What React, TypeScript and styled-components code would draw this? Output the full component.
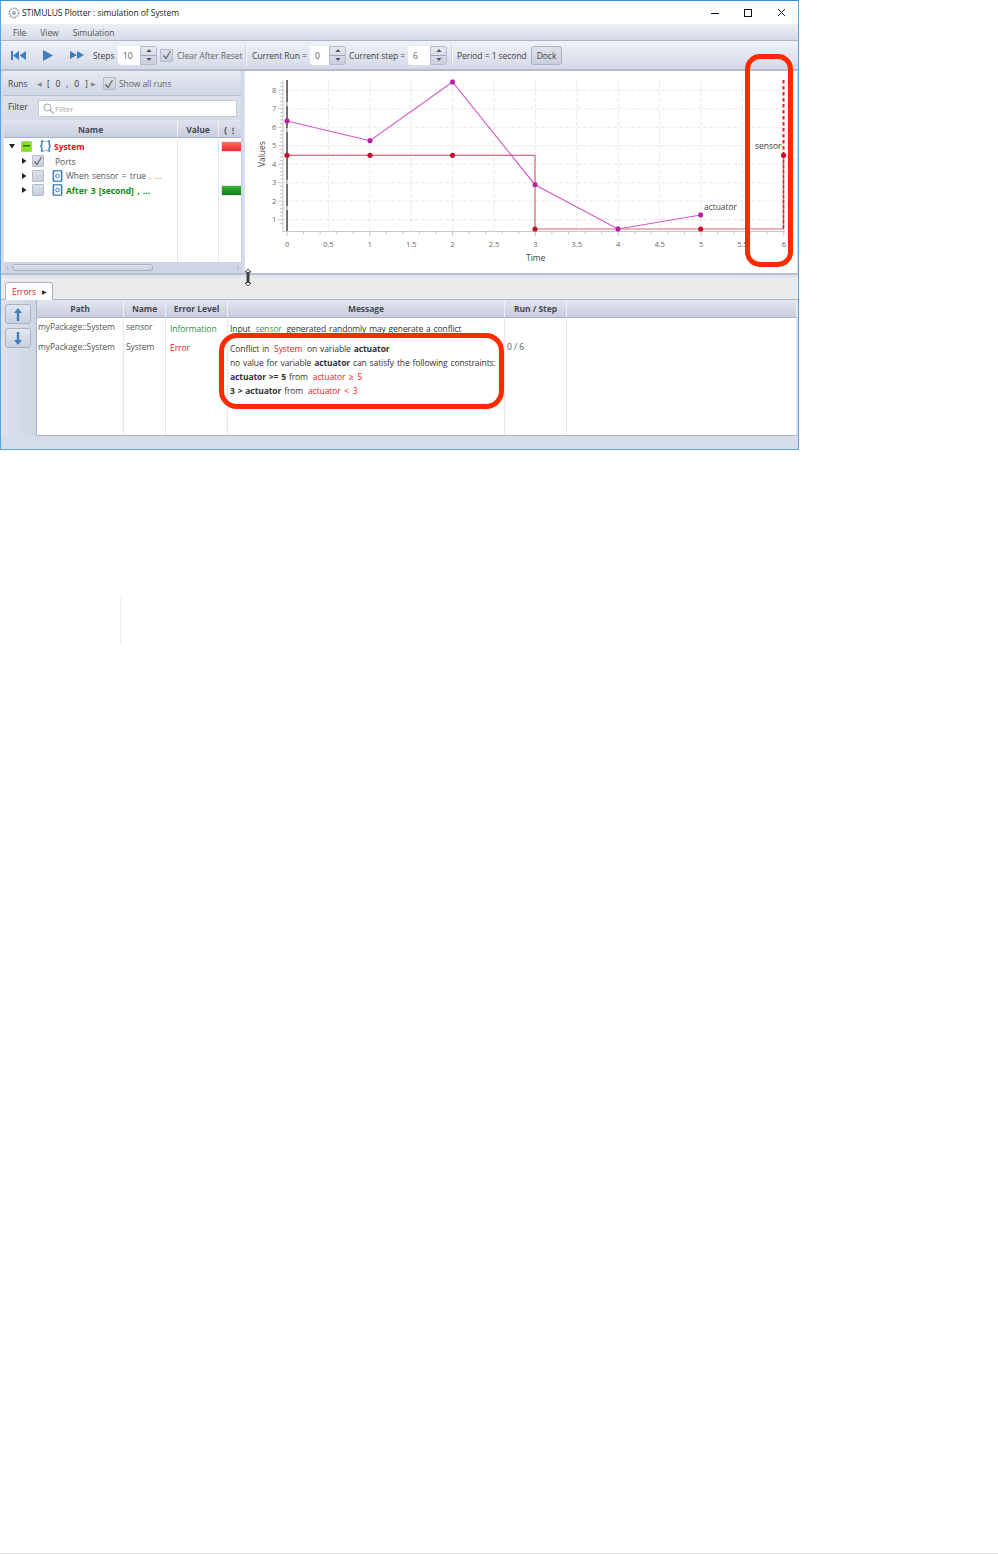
import React from "react";
import styled, { createGlobalStyle } from "styled-components";

const Global = createGlobalStyle`
  html, body { margin: 0; padding: 0; background: #fff; }
  body { font-family: "Open Sans", "Liberation Sans", sans-serif; font-size: 8.5px; letter-spacing: -0.05px; color: #3c3c3c; }
  * { box-sizing: border-box; }
`;

const Page = styled.div`
  height: 1554px;
  display: flex;
  flex-direction: column;
`;
const Win = styled.div`
  position: relative;
  width: 799px;
  height: 450px;
  border: 1px solid #5aa5e0;
  border-top-color: #2f8fd8;
  display: flex;
  flex-direction: column;
  background: #d6dcea;
  overflow: hidden;
`;
const TitleBar = styled.div`
  height: 23px;
  background: #fff;
  display: flex;
  align-items: center;
  padding-left: 7px;
  color: #222;
  flex: none;
`;
const TitleText = styled.span`
  margin-left: 2px;
`;
const WinControls = styled.div`
  margin-left: auto;
  display: flex;
  align-items: center;
  gap: 25px;
  padding-right: 12px;
`;
const MenuBar = styled.div`
  height: 17px;
  flex: none;
  background: linear-gradient(#eceff5, #d5dbe8);
  border-bottom: 1px solid #a7b6c9;
  display: flex;
  align-items: center;
  padding-left: 12px;
  gap: 14px;
  color: #555;
`;
const Toolbar = styled.div`
  height: 28px;
  flex: none;
  background: linear-gradient(#eff2f9, #d3d9e7);
  display: flex;
  align-items: center;
  padding-left: 10px;
  color: #444;
  white-space: nowrap;
`;
const ToolIcon = styled.svg<{ $ml: number }>`
  margin-left: ${(p) => p.$ml}px;
  flex: none;
`;
const Label = styled.span<{ $ml?: number; $muted?: boolean; $w?: number }>`
  margin-left: ${(p) => p.$ml ?? 0}px;
  color: ${(p) => (p.$muted ? "#666" : "#444")};
  ${(p) => (p.$w ? `width: ${p.$w}px; flex: none;` : "")}
`;
const Spinner = styled.div<{ $input: number; $ml: number }>`
  margin-left: ${(p) => p.$ml}px;
  display: grid;
  grid-template-columns: ${(p) => p.$input}px 17px;
  height: 19px;
  flex: none;
`;
const SpinInput = styled.div`
  background: #fff;
  border-radius: 3px 0 0 3px;
  padding: 4px 0 0 5px;
  color: #555;
  line-height: 11px;
`;
const SpinButtons = styled.div`
  display: flex;
  flex-direction: column;
  border: 1px solid #b4bccb;
  border-radius: 0 3px 3px 0;
  background: linear-gradient(#e6e9f1, #c9cfdd);
`;
const SpinButton = styled.div`
  flex: 1;
  display: flex;
  align-items: center;
  justify-content: center;
  & + & { border-top: 1px solid #9da6b8; }
`;
const CheckBox = styled.div<{ $bg?: string; $ml?: number; $size?: number }>`
  width: ${(p) => p.$size ?? 13}px;
  height: ${(p) => p.$size ?? 13}px;
  margin-left: ${(p) => p.$ml ?? 0}px;
  flex: none;
  background: ${(p) => p.$bg ?? "linear-gradient(#dde1ea, #c8cedd)"};
  border: 1px solid #b3bccd;
  border-radius: 1px;
  display: flex;
  align-items: center;
  justify-content: center;
`;
const Sep = styled.div<{ $ml: number; $mr: number }>`
  width: 2px;
  height: 21px;
  margin: 0 ${(p) => p.$mr}px 0 ${(p) => p.$ml}px;
  background: #f3f5fa;
  border-left: 1px solid #d0d5e2;
  flex: none;
`;
const DockButton = styled.div`
  margin-left: 3px;
  width: 31px;
  height: 19px;
  border: 1px solid #aab2c2;
  border-radius: 3px;
  background: linear-gradient(#dfe3ec, #c8cedc);
  display: flex;
  align-items: center;
  justify-content: center;
  color: #444;
`;
const Rule = styled.div`
  height: 2px;
  flex: none;
  background: #b7bccb;
`;
const Main = styled.div`
  height: 202px;
  flex: none;
  display: flex;
`;
const LeftPane = styled.div`
  width: 240px;
  flex: none;
  display: flex;
  flex-direction: column;
  background: #d6dcea;
  border-left: 2px solid #d6dcea;
`;
const RunsRow = styled.div`
  height: 25px;
  flex: none;
  display: flex;
  align-items: center;
  padding: 1px 0 0 5px;
  background: linear-gradient(#e8ebf3, #cfd5e3);
  border-bottom: 1px solid #b9c2d2;
  color: #444;
`;
const Bracket = styled.span`
  width: 49px;
  flex: none;
  padding-left: 5px;
  color: #333;
  letter-spacing: 0.7px;
  word-spacing: 2.2px;
`;
const TriMark = styled.span<{ $ml: number }>`
  margin-left: ${(p) => p.$ml}px;
  color: #888;
  font-size: 6px;
`;
const FilterRow = styled.div`
  height: 24px;
  flex: none;
  display: flex;
  align-items: center;
  padding-left: 5px;
  background: linear-gradient(#dde1ea, #d6dbe8);
`;
const FilterLabel = styled.span`
  width: 30px;
  flex: none;
  margin-top: -3px;
`;
const FilterBox = styled.div`
  width: 199px;
  height: 17px;
  margin-top: 1px;
  background: #fff;
  border: 1px solid #c3c9d6;
  display: flex;
  align-items: center;
  padding-left: 4px;
  gap: 1px;
  color: #a8a8a8;
  font-size: 8px;
`;
const TreeHead = styled.div`
  height: 18px;
  flex: none;
  margin-left: 1px;
  display: grid;
  grid-template-columns: 174px 41px 1fr;
  border-bottom: 1px solid #a9b3c4;
`;
const HeadCell = styled.div<{ $bare?: boolean }>`
  background: linear-gradient(#e0e4ee, #c8cedd);
  border-right: 1px solid ${(p) => (p.$bare ? "transparent" : "#eef1f7")};
  font-weight: 700;
  color: #454a55;
  display: flex;
  align-items: center;
  justify-content: ${(p) => (p.$bare ? "flex-end" : "center")};
  padding: 2px ${(p) => (p.$bare ? 3 : 0)}px 0 0;
  overflow: hidden;
`;
const MoreDots = styled.span`
  color: #333;
  font-weight: 700;
  margin-left: 2px;
  font-size: 8px;
`;
const TreeBody = styled.div`
  flex: 1;
  margin-left: 1px;
  background: #fff;
  display: grid;
  grid-template-columns: 174px 41px 1fr;
  grid-template-rows: 14.7px 14.7px 14.7px 14.7px 1fr;
  padding-top: 1px;
  min-height: 0;
`;
const NameCell = styled.div<{ $indent: number }>`
  border-right: 1px solid #dfe9f3;
  display: flex;
  align-items: center;
  padding-left: ${(p) => p.$indent}px;
  white-space: nowrap;
`;
const ValCell = styled.div`
  border-right: 1px solid #dfe9f3;
`;
const BarCell = styled.div`
  padding-left: 2px;
  display: flex;
  align-items: center;
`;
const ColorBar = styled.div<{ $c: string; $d: string }>`
  width: 100%;
  height: 11px;
  background: linear-gradient(${(p) => p.$c}, ${(p) => p.$d});
  border: 1px solid #e4e4e4;
  border-right: 0;
`;
const NodeText = styled.span<{ $color?: string; $bold?: boolean; $ml: number }>`
  margin-left: ${(p) => p.$ml}px;
  color: ${(p) => p.$color ?? "#555"};
  font-weight: ${(p) => (p.$bold ? 700 : 400)};
  word-spacing: 1.1px;
`;
const IconGap = styled.span`
  width: 8px;
  flex: none;
`;
const Orange = styled.span`
  color: #d9661a;
`;
const ScrollBar = styled.div`
  position: relative;
  height: 11px;
  flex: none;
  background: #d0d6e6;
  display: flex;
  align-items: center;
  padding: 0 2px;
  margin-left: 1px;
  color: #8a8f9a;
  font-size: 7px;
  justify-content: space-between;
`;
const Thumb = styled.div`
  position: absolute;
  left: 8px;
  top: 2px;
  width: 141px;
  height: 7px;
  background: linear-gradient(#dfe3ec, #ccd2df);
  border: 1px solid #a9b0bf;
  border-radius: 3px;
`;
const PaneGap = styled.div`
  width: 4px;
  flex: none;
  background: linear-gradient(90deg, #cdd3e2, #dde2ed);
`;
const ChartPane = styled.div`
  width: 552px;
  flex: none;
  background: #fff;
`;
const ChartSvg = styled.svg`
  display: block;
`;
const HSplit = styled.div`
  height: 5px;
  flex: none;
  background: linear-gradient(#b9bfce 0 2px, #dfe3ec 2px);
`;
const TabStrip = styled.div`
  height: 22px;
  flex: none;
  background: #ebebeb;
  display: flex;
  align-items: flex-end;
  padding-left: 4px;
  border-bottom: 1px solid #a9b5c6;
`;
const Tab = styled.div`
  width: 48px;
  height: 18px;
  background: #fff;
  border: 1px solid #a9b5c6;
  border-bottom: 0;
  border-radius: 3px 3px 0 0;
  display: flex;
  align-items: center;
  padding-left: 6px;
  color: #f02020;
  margin-bottom: -1px;
`;
const TabArrow = styled.span`
  color: #222;
  font-size: 6px;
  margin-left: 6px;
`;
const ErrorArea = styled.div`
  height: 136px;
  flex: none;
  display: flex;
`;
const SideBar = styled.div`
  width: 35px;
  flex: none;
  padding: 4px 0 0 4px;
  display: flex;
  flex-direction: column;
  gap: 4px;
  background: linear-gradient(90deg, #dde2ec, #ced5e4);
`;
const ArrowButton = styled.div`
  width: 26px;
  height: 20px;
  border: 1px solid #aab3c4;
  border-radius: 3px;
  background: linear-gradient(#e3e7ef, #c9cfde);
  display: flex;
  align-items: center;
  justify-content: center;
`;
const ErrorTable = styled.div`
  width: 761px;
  flex: none;
  background: #fff;
  border-left: 1px solid #a9b5c6;
  border-bottom: 1px solid #a9b5c6;
  display: flex;
  flex-direction: column;
`;
const GridRow = styled.div<{ $h?: number }>`
  display: grid;
  grid-template-columns: 87px 42px 62px 277px 62px 1fr;
  flex: ${(p) => (p.$h ? `0 0 ${p.$h}px` : "1")};
`;
const ColHead = styled.div`
  background: linear-gradient(#e2e6ef, #c8cedd);
  border-right: 1px solid #eef1f7;
  border-bottom: 1px solid #a9b3c4;
  font-weight: 700;
  color: #454a55;
  display: flex;
  align-items: center;
  justify-content: center;
`;
const Cell = styled.div<{ $color?: string; $top?: number; $left?: number }>`
  border-right: 1px solid #e0e9f3;
  padding: ${(p) => p.$top ?? 2}px 0 0 ${(p) => p.$left ?? 2}px;
  color: ${(p) => p.$color ?? "#555"};
  white-space: nowrap;
  line-height: 14px;
`;
const MsgLine = styled.div`
  color: #333;
  letter-spacing: -0.1px;
  word-spacing: 0.8px;
  height: 14px;
`;
const Red = styled.span`
  color: #f01818;
  margin: 0 2px;
  word-spacing: 1.6px;
`;
const Green = styled.span`
  color: #2f9d3a;
  margin: 0 2px;
`;
const Strong = styled.b`
  font-weight: 700;
  color: #333;
`;
const FootBar = styled.div`
  flex: 1;
  background: #d6dcea;
`;
const Callout = styled.div<{ $x: number; $y: number; $w: number; $h: number; $r: number }>`
  position: absolute;
  left: ${(p) => p.$x}px;
  top: ${(p) => p.$y}px;
  width: ${(p) => p.$w}px;
  height: ${(p) => p.$h}px;
  border: 5px solid #ff2a00;
  border-radius: ${(p) => p.$r}px;
  pointer-events: none;
`;
const ResizeCursor = styled.svg`
  position: absolute;
  left: 241px;
  top: 267px;
`;
const Stray = styled.div`
  width: 1px;
  height: 47px;
  margin: 148px 0 0 120px;
  background: #ececec;
  flex: none;
`;
const PageFoot = styled.div`
  margin-top: auto;
  height: 1px;
  background: #dcdcdc;
  flex: none;
`;

const BLUE = "#3f7fc0";
const SpinGlyph = ({ up }: { up?: boolean }) => (
  <svg width="6" height="3" viewBox="0 0 7 4">
    <path d={up ? "M3.5 0L7 4H0z" : "M3.5 4L7 0H0z"} fill="#555" />
  </svg>
);
const Spin = ({ value, input, ml }: { value: string; input: number; ml: number }) => (
  <Spinner $input={input} $ml={ml}>
    <SpinInput>{value}</SpinInput>
    <SpinButtons>
      <SpinButton><SpinGlyph up /></SpinButton>
      <SpinButton><SpinGlyph /></SpinButton>
    </SpinButtons>
  </Spinner>
);
const Tick = () => (
  <svg width="10" height="10" viewBox="0 0 10 10">
    <path d="M1.5 5.5L4 8.5L8.5 1" fill="none" stroke="#666" strokeWidth="1.2" />
  </svg>
);
const Disclosure = ({ open }: { open?: boolean }) => (
  <svg width="6" height="6" viewBox="0 0 6 6">
    <path d={open ? "M0 1H6L3 5.5z" : "M1 0V6L5.5 3z"} fill="#222" />
  </svg>
);
const BraceIcon = () => (
  <svg width="11" height="12" viewBox="0 0 11 12">
    <path d="M3.5 1H1.8V4.5L0.6 6L1.8 7.5V11H3.5M7.5 1H9.2V4.5L10.4 6L9.2 7.5V11H7.5" fill="none" stroke={BLUE} strokeWidth="1.4" />
    <path d="M3.5 1.5H7.5M3.5 10.5H7.5" stroke="#a9c4e0" strokeWidth="1" />
  </svg>
);
const ModuleIcon = () => (
  <svg width="11" height="12" viewBox="0 0 11 12">
    <rect x="1.5" y="0.8" width="8" height="10.4" fill="#fff" stroke={BLUE} strokeWidth="1.3" />
    <circle cx="5.5" cy="6" r="1.8" fill="none" stroke={BLUE} strokeWidth="1" />
    <path d="M0 3H1.5M0 6H1.5M0 9H1.5M9.5 3H11M9.5 6H11M9.5 9H11" stroke={BLUE} strokeWidth="1" />
  </svg>
);

const xs = (t: number) => 287 + t * 82.8;
const ys = (v: number) => 219.7 - (v - 1) * 18.49;
const actuator: [number, number][] = [[287, 121], [370, 140.7], [452.5, 82], [535, 184.7], [618, 229], [700.7, 215]];
const sensorDots: [number, number][] = [[287, 155.3], [370, 155.3], [452.5, 155.3], [535, 229], [700.7, 229], [783.5, 155.3]];

const Chart = () => {
  const xTicks = Array.from({ length: 13 }, (_, i) => i / 2);
  const xMinor = Array.from({ length: 61 }, (_, i) => i / 10).filter((_, i) => i % 2 === 0);
  const yMinor = Array.from({ length: 40 }, (_, i) => 0.8 + i * 0.2).filter((v) => ys(v) > 80 && ys(v) < 231);
  return (
    <ChartSvg width="552" height="202" viewBox="245 71 552 202">
      {xTicks.slice(1).map((t) => (
        <line key={t} x1={xs(t)} x2={xs(t)} y1={80} y2={231} stroke="#e8e8e8" strokeDasharray="4 2" />
      ))}
      {[1, 2, 3, 4, 5, 6, 7, 8].map((v) => (
        <line key={v} x1={283} x2={784} y1={ys(v)} y2={ys(v)} stroke="#e8e8e8" strokeDasharray="4 2" />
      ))}
      <path d="M283 80V231.5H785" fill="none" stroke="#c8c8c8" />
      {xMinor.map((t, i) => (
        <line key={i} x1={xs(t)} x2={xs(t)} y1={231} y2={i % 5 === 0 ? 236 : 234} stroke="#c4c4c4" />
      ))}
      {yMinor.map((v, i) => (
        <line key={i} x1={Math.abs(v - Math.round(v)) < 0.01 ? 278 : 280} x2={283} y1={ys(v)} y2={ys(v)} stroke="#c4c4c4" />
      ))}
      <line x1={287} x2={287} y1={80} y2={231} stroke="#b5b5b5" strokeWidth="1.6" />
      <line x1={287} x2={287} y1={80} y2={231} stroke="#5c5c5c" strokeWidth="1.6" strokeDasharray="22 4" />
      <polyline points="287,155.3 535,155.3 535,229 783.5,229 783.5,155.3" fill="none" stroke="#cf6a78" strokeWidth="1.2" />
      <polyline points={actuator.map((p) => p.join(",")).join(" ")} fill="none" stroke="#d257c4" strokeWidth="1.1" />
      <line x1={783.5} x2={783.5} y1={80} y2={155} stroke="#f8142c" strokeWidth="2" strokeDasharray="3.5 2.5" />
      <line x1={783.5} x2={783.5} y1={155} y2={229} stroke="#f8142c" strokeWidth="1.6" strokeDasharray="3.5 1.5" />
      {sensorDots.map(([x, y]) => (
        <circle key={`${x}${y}`} cx={x} cy={y} r="2.6" fill="#c4122e" />
      ))}
      {actuator.map(([x, y]) => (
        <rect key={x} x={x - 2.4} y={y - 2.4} width="4.8" height="4.8" rx="1.6" fill="#b81fa6" />
      ))}
      <g fontSize="7.5" fill="#666" fontFamily="Open Sans, sans-serif" textAnchor="middle">
        {xTicks.map((t) => (
          <text key={t} x={xs(t)} y={247}>{t}</text>
        ))}
        {[1, 2, 3, 4, 5, 6, 7, 8].map((v) => (
          <text key={v} x={274} y={ys(v) + 2.5}>{v}</text>
        ))}
      </g>
      <g fontSize="8.5" fill="#444" fontFamily="Open Sans, sans-serif">
        <text x={526} y={261}>Time</text>
        <text x={704} y={210}>actuator</text>
        <text x={755} y={149}>sensor</text>
        <text transform="translate(265,167) rotate(-90)">Values</text>
      </g>
    </ChartSvg>
  );
};

export default function App() {
  return (
    <Page>
      <Global />
      <Win>
        <TitleBar>
          <svg width="12" height="12" viewBox="0 0 12 12">
            <circle cx="6" cy="6" r="4.6" fill="none" stroke="#8a8f9c" strokeWidth="1.6" strokeDasharray="1.5 1" />
            <circle cx="6" cy="6" r="2" fill="#a9aeb9" />
          </svg>
          <TitleText>STIMULUS Plotter : simulation of System</TitleText>
          <WinControls>
            <svg width="8" height="8" viewBox="0 0 8 8"><path d="M0 4.5H8" stroke="#111" /></svg>
            <svg width="8" height="8" viewBox="0 0 8 8"><rect x="0.5" y="0.5" width="7" height="7" fill="none" stroke="#111" /></svg>
            <svg width="9" height="9" viewBox="0 0 9 9"><path d="M1 1L8 8M8 1L1 8" stroke="#222" /></svg>
          </WinControls>
        </TitleBar>
        <MenuBar>
          <span>File</span>
          <span>View</span>
          <span>Simulation</span>
        </MenuBar>
        <Toolbar>
          <ToolIcon $ml={0} width="15" height="9" viewBox="0 0 15 9">
            <path d="M0 0H2V9H0zM8 0V9L2 4.5zM15 0V9L8.5 4.5z" fill={BLUE} />
          </ToolIcon>
          <ToolIcon $ml={17} width="10" height="11" viewBox="0 0 10 11">
            <path d="M0 0L10 5.5L0 11z" fill={BLUE} />
          </ToolIcon>
          <ToolIcon $ml={17} width="14" height="8" viewBox="0 0 14 8">
            <path d="M0 0L7 4L0 8zM7 0L14 4L7 8z" fill={BLUE} />
          </ToolIcon>
          <Label $ml={9} $w={21}>Steps</Label>
          <Spin value="10" input={22} ml={4} />
          <CheckBox $ml={3}><Tick /></CheckBox>
          <Label $ml={4} $muted $w={65}>Clear After Reset</Label>
          <Sep $ml={3} $mr={5} />
          <Label $w={54}>Current Run =</Label>
          <Spin value="0" input={19} ml={4} />
          <Label $ml={3} $w={56}>Current step =</Label>
          <Spin value="6" input={22} ml={3} />
          <Sep $ml={4} $mr={4} />
          <Label $w={71}>Period = 1 second</Label>
          <DockButton>Dock</DockButton>
        </Toolbar>
        <Rule />
        <Main>
          <LeftPane>
            <RunsRow>
              <Label $w={20}>Runs</Label>
              <TriMark $ml={9}>◀</TriMark>
              <Bracket>[ 0 , 0 ]</Bracket>
              <TriMark $ml={0}>▶</TriMark>
              <CheckBox $ml={7}><Tick /></CheckBox>
              <Label $ml={3} $muted>Show all runs</Label>
            </RunsRow>
            <FilterRow>
              <FilterLabel>Filter</FilterLabel>
              <FilterBox>
                <svg width="11" height="11" viewBox="0 0 11 11">
                  <circle cx="4.5" cy="4.5" r="3.5" fill="none" stroke="#a5a5a5" />
                  <path d="M7 7L10.5 10.5" stroke="#a5a5a5" strokeWidth="1.3" />
                </svg>
                Filter
              </FilterBox>
            </FilterRow>
            <TreeHead>
              <HeadCell>Name</HeadCell>
              <HeadCell>Value</HeadCell>
              <HeadCell $bare>(<MoreDots>⋮</MoreDots></HeadCell>
            </TreeHead>
            <TreeBody>
              <NameCell $indent={5}>
                <Disclosure open />
                <CheckBox $ml={6} $size={11} $bg="#7fe81a">
                  <svg width="7" height="2"><rect width="7" height="1.4" fill="#3a5a20" /></svg>
                </CheckBox>
                <IconGap />
                <BraceIcon />
                <NodeText $ml={3} $color="#f01010" $bold>System</NodeText>
              </NameCell>
              <ValCell />
              <BarCell><ColorBar $c="#ff6a6a" $d="#f02828" /></BarCell>

              <NameCell $indent={17}>
                <Disclosure />
                <CheckBox $ml={5} $size={12}><Tick /></CheckBox>
                <NodeText $ml={11}>Ports</NodeText>
              </NameCell>
              <ValCell />
              <BarCell />

              <NameCell $indent={17}>
                <Disclosure />
                <CheckBox $ml={5} $size={12} />
                <IconGap />
                <ModuleIcon />
                <NodeText $ml={3}>When sensor = true <Orange>, ...</Orange></NodeText>
              </NameCell>
              <ValCell />
              <BarCell />

              <NameCell $indent={17}>
                <Disclosure />
                <CheckBox $ml={5} $size={12} />
                <IconGap />
                <ModuleIcon />
                <NodeText $ml={3} $color="#0f8a0f" $bold>After 3 [second] , ...</NodeText>
              </NameCell>
              <ValCell />
              <BarCell><ColorBar $c="#36b236" $d="#137f1c" /></BarCell>

              <NameCell $indent={0} />
              <ValCell />
              <BarCell />
            </TreeBody>
            <ScrollBar>
              <span>‹</span>
              <Thumb />
              <span>›</span>
            </ScrollBar>
          </LeftPane>
          <PaneGap />
          <ChartPane><Chart /></ChartPane>
        </Main>
        <HSplit />
        <TabStrip>
          <Tab>Errors<TabArrow>▶</TabArrow></Tab>
        </TabStrip>
        <ErrorArea>
          <SideBar>
            <ArrowButton>
              <svg width="8" height="13" viewBox="0 0 8 13"><path d="M4 0L8 5H5.2V13H2.8V5H0z" fill={BLUE} /></svg>
            </ArrowButton>
            <ArrowButton>
              <svg width="8" height="13" viewBox="0 0 8 13"><path d="M4 13L8 8H5.2V0H2.8V8H0z" fill={BLUE} /></svg>
            </ArrowButton>
          </SideBar>
          <ErrorTable>
            <GridRow $h={18}>
              <ColHead>Path</ColHead>
              <ColHead>Name</ColHead>
              <ColHead>Error Level</ColHead>
              <ColHead>Message</ColHead>
              <ColHead>Run / Step</ColHead>
              <ColHead />
            </GridRow>
            <GridRow $h={20}>
              <Cell $left={1}>myPackage::System</Cell>
              <Cell>sensor</Cell>
              <Cell $color="#1f9040" $top={4} $left={4}>Information</Cell>
              <Cell $top={4}><MsgLine>Input <Green>sensor</Green> generated randomly may generate a conflict</MsgLine></Cell>
              <Cell />
              <Cell />
            </GridRow>
            <GridRow>
              <Cell $left={1}>myPackage::System</Cell>
              <Cell>System</Cell>
              <Cell $color="#f01818" $top={3} $left={4}>Error</Cell>
              <Cell $top={4}>
                <MsgLine>Conflict in <Red>System</Red> on variable <Strong>actuator</Strong></MsgLine>
                <MsgLine>no value for variable <Strong>actuator</Strong> can satisfy the following constraints:</MsgLine>
                <MsgLine><Strong>actuator &gt;= 5</Strong> from <Red>actuator ≥ 5</Red></MsgLine>
                <MsgLine><Strong>3 &gt; actuator</Strong> from <Red>actuator &lt; 3</Red></MsgLine>
              </Cell>
              <Cell>0 / 6</Cell>
              <Cell />
            </GridRow>
          </ErrorTable>
        </ErrorArea>
        <FootBar />
        <Callout $x={744} $y={53} $w={48} $h={213} $r={15} />
        <Callout $x={218} $y={332} $w={285} $h={76} $r={18} />
        <ResizeCursor width="12" height="19" viewBox="0 0 12 19">
          <path d="M6 1L9 4H7V15H9L6 18L3 15H5V4H3z" fill="#fff" stroke="#222" strokeWidth="0.8" />
          <path d="M6 4V15" stroke="#111" strokeWidth="1.4" />
        </ResizeCursor>
      </Win>
      <Stray />
      <PageFoot />
    </Page>
  );
}
